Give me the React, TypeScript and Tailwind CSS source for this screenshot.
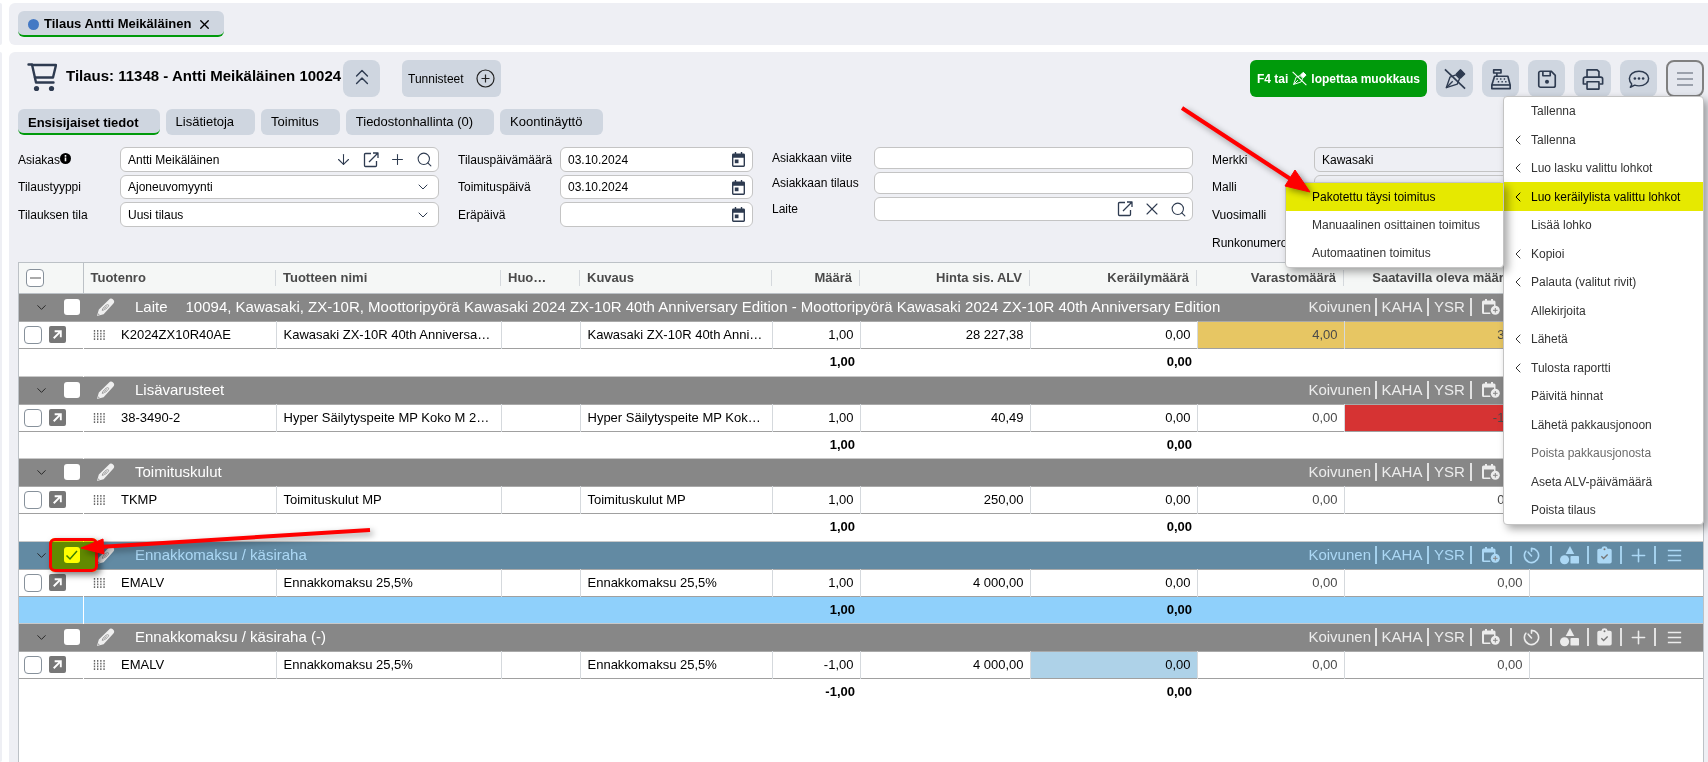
import React from 'react';
import { ArrowDown, ChevronDown, ChevronLeft, ChevronsUp, Plus, Search, X } from 'lucide-react';

type IconProps = { className?: string };

const IconCart = ({ className }: IconProps) => (
  <svg className={className} viewBox="0 0 30 30" fill="none" stroke="currentColor" strokeWidth="2.400" strokeLinecap="round" strokeLinejoin="round" aria-hidden>
    <path d="M1.500 2.500H5l4 18h17.500" />
    <path d="M5 3h24l-3 12.500H8" />
    <circle cx="9.500" cy="26.500" r="2.600" fill="currentColor" stroke="none" />
    <circle cx="24.500" cy="26.500" r="2.600" fill="currentColor" stroke="none" />
  </svg>
);

const IconExternal = ({ className }: IconProps) => (
  <svg className={className} viewBox="0 0 16 16" fill="none" stroke="currentColor" strokeWidth="1.300" strokeLinejoin="round" aria-hidden>
    <path d="M8 1.500H2.500a1 1 0 0 0-1 1v11a1 1 0 0 0 1 1h10a1 1 0 0 0 1-1V9" />
    <path d="M6 10 14.500 1.500M10 1h5v5" />
  </svg>
);

const IconCalendar = ({ className }: IconProps) => (
  <svg className={className} viewBox="0 0 14 16" aria-hidden>
    <path fill="currentColor" fillRule="evenodd" d="M3 0h1.500v1.500h5V0H11v1.500h1.500A1.500 1.500 0 0 1 14 3v11.500a1.500 1.500 0 0 1-1.500 1.500h-11A1.500 1.500 0 0 1 0 14.500V3a1.500 1.500 0 0 1 1.500-1.500H3zM1.500 6v8.500h11V6z" />
    <rect x="3" y="8" width="4" height="4" fill="currentColor" />
  </svg>
);

const IconPenOff = ({ className }: IconProps) => (
  <svg className={className} viewBox="0 0 24 24" fill="none" stroke="currentColor" strokeWidth="1.500" strokeLinejoin="round" aria-hidden>
    <path d="M2.500 21.500 6.500 10l6.500-2.500 4 4L14.500 17.500z" />
    <path d="M2.500 21.500 9.500 14.500" />
    <path d="M13.500 6.500 18 2l4.500 4.500-4.500 4.500z" fill="currentColor" />
    <path d="M1 1.500 23 22.500" strokeWidth="1.800" />
  </svg>
);

const IconRegister = ({ className }: IconProps) => (
  <svg className={className} viewBox="0 0 24 24" fill="none" stroke="currentColor" strokeWidth="1.800" strokeLinejoin="round" aria-hidden>
    <path d="M4 2h8v3.500H4zM7.500 5.500V9M5 9h14.500l2.500 9.500V22.500H2V18.500z" />
    <path d="M2 18.500h20" />
    <path d="M7 12h1.500M11 12h1.500M15 12h1.500M8.500 15h1.500M12.500 15H14M16.500 15H18" />
  </svg>
);

const IconFloppy = ({ className }: IconProps) => (
  <svg className={className} viewBox="0 0 24 24" fill="none" stroke="currentColor" strokeWidth="1.800" strokeLinejoin="round" aria-hidden>
    <path d="M5 3.500h11.500L21 8v11a2 2 0 0 1-2 2H5a2 2 0 0 1-2-2V5.500a2 2 0 0 1 2-2z" />
    <path d="M7.500 4v4.500h8V4" />
    <circle cx="12" cy="15" r="2.200" fill="currentColor" stroke="none" />
  </svg>
);

const IconPrinter = ({ className }: IconProps) => (
  <svg className={className} viewBox="0 0 24 24" fill="none" stroke="currentColor" strokeWidth="1.800" strokeLinejoin="round" aria-hidden>
    <path d="M5.500 10V2h11l2 2v6" />
    <path d="M5 17.500H1.500V12a2 2 0 0 1 2-2h17a2 2 0 0 1 2 2v5.500H19" />
    <path d="M5.500 15h13v8h-13z" />
  </svg>
);

const IconChat = ({ className }: IconProps) => (
  <svg className={className} viewBox="0 0 24 24" fill="none" stroke="currentColor" strokeWidth="1.600" strokeLinejoin="round" aria-hidden>
    <path d="M12 3.500c6 0 10.500 3.500 10.500 8s-4.500 8-10.500 8c-1.800 0-3.300-.3-4.700-.8L2.500 21c1-1.200 1.500-2.300 1.500-3.500-1.700-1.600-2.500-3.700-2.500-6 0-4.500 4.500-8 10.500-8z" />
    <g fill="currentColor" stroke="none">
      <circle cx="7.500" cy="11.500" r="1.400" />
      <circle cx="12" cy="11.500" r="1.400" />
      <circle cx="16.500" cy="11.500" r="1.400" />
    </g>
  </svg>
);

const IconBurger = ({ className }: IconProps) => (
  <svg className={className} viewBox="0 0 18 18" fill="none" stroke="currentColor" strokeWidth="2" aria-hidden>
    <path d="M1 3h16M1 9h16M1 15h16" />
  </svg>
);

const IconPencil = ({ className }: IconProps) => (
  <svg className={className} viewBox="0 0 20 20" aria-hidden>
    <path fill="#efefef" d="M1 19 3 12 13.500 1.800a3 3 0 0 1 4.600 4.300L8 17z" />
    <path d="M1.500 18.500l1-2.500L4 17.500z" fill="#aaaaaa" />
    <path d="M6.500 13c0-2 4-6 5.800-6s.8 2-.6 3.300-4 2.700-5.200 2.700z" fill="none" stroke="#9a9a9a" />
    <path d="M8.500 11.300 11 8.800" stroke="#9a9a9a" />
  </svg>
);

const IconCalendarPlus = ({ className }: IconProps) => (
  <svg className={className} viewBox="0 0 18 18" aria-hidden>
    <path fill="currentColor" fillRule="evenodd" d="M3 1h2v1.500h4V1h2v1.500h1A1.500 1.500 0 0 1 13.500 4v4.200L12 8.500V6.500H2v8h6l.5 1.500H1.500A1.500 1.500 0 0 1 0 14.500V4a1.500 1.500 0 0 1 1.500-1.500H3z" />
    <circle cx="13.300" cy="12.300" r="4.500" fill="currentColor" />
    <path d="M11 12.300h4.600M13.300 10v4.600" stroke="#858585" />
  </svg>
);

const IconTimer = ({ className }: IconProps) => (
  <svg className={className} viewBox="0 0 18 18" fill="none" stroke="currentColor" strokeWidth="1.700" strokeLinecap="round" aria-hidden>
    <path d="M9 1.500v3M9 1.500a7.500 7.500 0 1 1-6 3" />
    <path d="M5.500 5.500 9 9.500" />
  </svg>
);

const IconShapes = ({ className }: IconProps) => (
  <svg className={className} viewBox="0 0 20 20" fill="currentColor" aria-hidden>
    <path d="M10.500 0 15 8.500H6z" />
    <circle cx="4.800" cy="14.500" r="4.800" />
    <rect x="11" y="10.500" width="9" height="8" rx="1" />
  </svg>
);

const IconClipboard = ({ className }: IconProps) => (
  <svg className={className} viewBox="0 0 16 20" aria-hidden>
    <path fill="currentColor" d="M2 3h2.500a3.600 3.600 0 0 1 7 0H14a2 2 0 0 1 2 2v12.500a2 2 0 0 1-2 2H2a2 2 0 0 1-2-2V5a2 2 0 0 1 2-2z" />
    <circle cx="8" cy="3.500" r="1.100" fill="#777777" />
    <path d="m4.500 11.500 2.500 2.500 4.500-4.500" fill="none" stroke="#777777" strokeWidth="1.500" />
  </svg>
);

const IconInfo = ({ className }: IconProps) => (
  <svg className={className} viewBox="0 0 12 12" aria-hidden>
    <circle cx="6" cy="6" r="6" fill="#000000" />
    <path d="M6 2.300v1.700M6 5v4" stroke="#ffffff" strokeWidth="1.700" />
  </svg>
);

const IconOpenBox = ({ className }: IconProps) => (
  <svg className={className} viewBox="0 0 18 18" aria-hidden>
    <rect width="18" height="18" rx="2" fill="#777777" />
    <path d="M5 13 12 6M6 5.500h6.500V12" fill="none" stroke="#ffffff" strokeWidth="2" />
  </svg>
);

const IconGrip = ({ className }: IconProps) => (
  <svg className={className} viewBox="0 0 13 11" aria-hidden>
    <path d="M1 0v11M4.500 0v11M8 0v11M11.500 0v11" stroke="#666666" strokeWidth="1.500" strokeDasharray="2 1" />
  </svg>
);

const fieldBox = 'flex items-center rounded-md border border-[#c4c4c4] min-w-0 flex-1 h-full';

type FieldProps = {
  id: string;
  label: string;
  value?: string;
  height: string;
  info?: boolean;
  readOnly?: boolean;
  children?: React.ReactNode;
};

const TextField = ({ id, label, value = '', height, info, readOnly, children }: FieldProps) => (
  <div className={`flex items-center ${height}`}>
    <label htmlFor={id} className="flex w-[102px] shrink-0 items-center">
      {label}
      {info && <IconInfo className="mb-0.5 size-[11px]" />}
    </label>
    <div className={`${fieldBox} ${readOnly ? '' : 'bg-white'}`}>
      <input id={id} defaultValue={value} readOnly={readOnly} className="w-full min-w-0 flex-1 bg-transparent pl-[7px] outline-none" />
      {children}
    </div>
  </div>
);

const SelectField = ({ id, label, value, height }: FieldProps) => (
  <div className={`flex items-center ${height}`}>
    <label htmlFor={id} className="w-[102px] shrink-0">{label}</label>
    <div className={`${fieldBox} relative bg-white`}>
      <select id={id} defaultValue={value} className="w-full appearance-none bg-transparent pl-[7px] outline-none">
        <option>{value}</option>
      </select>
      <ChevronDown className="pointer-events-none absolute right-[7px] size-4 text-[#2e3b50]" strokeWidth={1.5} />
    </div>
  </div>
);

const FieldButton = ({ label, children }: { label: string; children: React.ReactNode }) => (
  <button type="button" aria-label={label} className="flex w-[27px] shrink-0 items-center justify-center text-[#2e3b50]">
    {children}
  </button>
);

const tabs = ['Ensisijaiset tiedot', 'Lisätietoja', 'Toimitus', 'Tiedostonhallinta (0)', 'Koontinäyttö'];

const tools: { label: string; icon: React.ComponentType<IconProps> }[] = [
  { label: 'Lopeta muokkaus', icon: IconPenOff },
  { label: 'Kassa', icon: IconRegister },
  { label: 'Tallenna', icon: IconFloppy },
  { label: 'Tulosta', icon: IconPrinter },
  { label: 'Viestit', icon: IconChat },
];

type MenuItem = { label: string; sub?: boolean; muted?: boolean; open?: string[] };

const menuItems: MenuItem[] = [
  { label: 'Tallenna' },
  { label: 'Tallenna', sub: true },
  { label: 'Luo lasku valittu lohkot', sub: true },
  {
    label: 'Luo keräilylista valittu lohkot',
    sub: true,
    open: ['Pakotettu täysi toimitus', 'Manuaalinen osittainen toimitus', 'Automaatinen toimitus'],
  },
  { label: 'Lisää lohko' },
  { label: 'Kopioi', sub: true },
  { label: 'Palauta (valitut rivit)', sub: true },
  { label: 'Allekirjoita' },
  { label: 'Lähetä', sub: true },
  { label: 'Tulosta raportti', sub: true },
  { label: 'Päivitä hinnat' },
  { label: 'Lähetä pakkausjonoon' },
  { label: 'Poista pakkausjonosta', muted: true },
  { label: 'Aseta ALV-päivämäärä' },
  { label: 'Poista tilaus' },
];

const SubMenu = ({ items }: { items: string[] }) => (
  <ul className="absolute top-0 right-full w-[219px] rounded-sm border border-[#c4c4c4] bg-white text-[#333333] shadow-[4px_4px_9px_rgba(0,0,0,0.35)]">
    {items.map((item, i) => (
      <li key={item} className={`h-[28px] ${i === 0 ? 'bg-[#e6e900] text-black' : ''}`}>
        <button type="button" className="h-full w-full pl-[26px] text-left whitespace-nowrap">{item}</button>
      </li>
    ))}
    <li className="pointer-events-none absolute -top-[77px] -left-[106px]" aria-hidden>
      <svg className="h-[90px] w-[135px] drop-shadow-[3px_3px_3px_rgba(0,0,0,0.4)]" viewBox="0 0 135 90">
        <path d="M2 2 112 74" stroke="#ff0000" strokeWidth="4" />
        <path d="M130 86 105 80l10-16z" fill="#ff0000" stroke="#ff0000" />
      </svg>
    </li>
  </ul>
);

const OrderMenu = () => (
  <ul className="absolute top-full right-0 z-20 -mt-px w-[201px] rounded-sm border border-[#c4c4c4] bg-white text-[#333333] shadow-[4px_4px_9px_rgba(0,0,0,0.35)]">
    {menuItems.map((item, i) => (
      <li key={i} className={`relative h-[28px] even:h-[29px] ${item.open ? 'bg-[#e6e900] text-black' : ''} ${item.muted ? 'text-[#6b6b6b]' : ''}`}>
        <button type="button" className="flex h-full w-full items-center pl-[6px] text-left whitespace-nowrap">
          <span className="w-[21px]">{item.sub && <ChevronLeft className="size-4" strokeWidth={1.5} />}</span>
          {item.label}
        </button>
        {item.open && <SubMenu items={item.open} />}
      </li>
    ))}
  </ul>
);

const columns = [
  { title: 'Tuotenro', style: 'w-[193px] text-left' },
  { title: 'Tuotteen nimi', style: 'w-[225px] text-left' },
  { title: 'Huo…', style: 'w-[79px] text-left' },
  { title: 'Kuvaus', style: 'w-[192px] text-left' },
  { title: 'Määrä', style: 'w-[88px] text-right' },
  { title: 'Hinta sis. ALV', style: 'w-[170px] text-right' },
  { title: 'Keräilymäärä', style: 'w-[167px] text-right' },
  { title: 'Varastomäärä', style: 'w-[147px] text-right' },
  { title: 'Saatavilla oleva määrä', style: 'w-[185px] pr-[10px] text-right' },
];

type Block = {
  title: string;
  detail?: string;
  selected?: boolean;
  code: string;
  name: string;
  description: string;
  amount: string;
  price: string;
  stock: string;
  available: string;
  pickColor?: string;
  stockColor?: string;
  availableColor?: string;
};

const blocks: Block[] = [
  {
    title: 'Laite',
    detail: '10094, Kawasaki, ZX-10R, Moottoripyörä Kawasaki 2024 ZX-10R 40th Anniversary Edition - Moottoripyörä Kawasaki 2024 ZX-10R 40th Anniversary Edition',
    code: 'K2024ZX10R40AE',
    name: 'Kawasaki ZX-10R 40th Anniversa…',
    description: 'Kawasaki ZX-10R 40th Anni…',
    amount: '1,00',
    price: '28 227,38',
    stock: '4,00',
    available: '3,00',
    stockColor: 'bg-[#e7c663]',
    availableColor: 'bg-[#e7c663]',
  },
  {
    title: 'Lisävarusteet',
    code: '38-3490-2',
    name: 'Hyper Säilytyspeite MP Koko M 2…',
    description: 'Hyper Säilytyspeite MP Kok…',
    amount: '1,00',
    price: '40,49',
    stock: '0,00',
    available: '-1,00',
    availableColor: 'bg-[#d63333]',
  },
  {
    title: 'Toimituskulut',
    code: 'TKMP',
    name: 'Toimituskulut MP',
    description: 'Toimituskulut MP',
    amount: '1,00',
    price: '250,00',
    stock: '0,00',
    available: '0,00',
  },
  {
    title: 'Ennakkomaksu / käsiraha',
    selected: true,
    code: 'EMALV',
    name: 'Ennakkomaksu 25,5%',
    description: 'Ennakkomaksu 25,5%',
    amount: '1,00',
    price: '4 000,00',
    stock: '0,00',
    available: '0,00',
  },
  {
    title: 'Ennakkomaksu / käsiraha (-)',
    code: 'EMALV',
    name: 'Ennakkomaksu 25,5%',
    description: 'Ennakkomaksu 25,5%',
    amount: '-1,00',
    price: '4 000,00',
    stock: '0,00',
    available: '0,00',
    pickColor: 'bg-[#aed2e8]',
  },
];

const Separator = () => <span className="h-[18px] w-[2px] bg-current opacity-90" />;

const BlockActions = () => (
  <div className="ml-auto flex items-center text-[#ececec] in-data-selected:text-[#acd8f5]">
    <button type="button" className="pr-[4px]">Koivunen</button>
    <Separator />
    <button type="button" className="w-[50px]">KAHA</button>
    <Separator />
    <button type="button" className="w-[41px]">YSR</button>
    <Separator />
    <button type="button" aria-label="Lisää päivä" className="flex w-[38px] justify-center"><IconCalendarPlus className="size-[18px]" /></button>
    <Separator />
    <button type="button" aria-label="Ajastin" className="flex w-[38px] justify-center"><IconTimer className="size-[17px]" /></button>
    <Separator />
    <button type="button" aria-label="Paketit" className="flex w-[35px] justify-center"><IconShapes className="size-[19px]" /></button>
    <Separator />
    <button type="button" aria-label="Tehtävät" className="flex w-[31px] justify-center"><IconClipboard className="h-[18px] w-[15px]" /></button>
    <Separator />
    <button type="button" aria-label="Lisää rivi" className="flex w-[32px] justify-center"><Plus className="size-[21px]" strokeWidth={1.8} /></button>
    <Separator />
    <button type="button" aria-label="Lohkon valikko" className="mr-[10px] flex w-[37px] justify-center"><IconBurger className="size-[15px]" /></button>
  </div>
);

// Marks the block whose picking list is being created.
// No z-index on the wrapper: the yellow layer has to blend with the row below it.
const SelectionMark = () => (
  <div className="pointer-events-none absolute -top-[4px] left-[30px]" aria-hidden>
    <div className="h-[34px] w-[49px] rounded-md bg-[#ffff00] mix-blend-multiply" />
    <div className="absolute inset-0 rounded-md border-[3px] border-[#ff0000] shadow-[3px_3px_6px_rgba(0,0,0,0.5)]" />
    <svg className="absolute -top-[11px] left-[30px] h-[30px] w-[295px] drop-shadow-[3px_3px_3px_rgba(0,0,0,0.4)]" viewBox="0 0 295 30">
      <path d="M20 20 291 3" stroke="#ff0000" strokeWidth="4" />
      <path d="M2 21 24 12l1 15z" fill="#ff0000" stroke="#ff0000" />
    </svg>
  </div>
);

const cell = 'border-r border-[#d5d9dd] px-[6px] whitespace-nowrap';

const BlockRows = ({ block, index }: { block: Block; index: number }) => {
  const { selected } = block;
  return (
    <tbody>
      <tr data-selected={selected || undefined} className={`h-[28px] border-t border-[#c9c9c9] text-[15px] ${selected ? 'bg-[#628aa3] text-[#acd8f5]' : 'bg-[#878787] text-white'}`}>
        <td className="relative p-0">
          <div className="flex items-center pl-[15px]">
            <button type="button" aria-label="Sulje lohko" className="text-[#222222]"><ChevronDown className="size-[15px]" strokeWidth={1.5} /></button>
            <input
              type="checkbox"
              defaultChecked={selected}
              aria-label={`Valitse ${block.title}`}
              className="ml-[15px] size-4 appearance-none rounded-[3px] bg-white"
            />
            {selected && (
              <svg className="pointer-events-none -ml-[15px] size-[14px]" viewBox="0 0 14 14" fill="none" stroke="#3c7f5c" strokeWidth="1.5" aria-hidden>
                <path d="m1.500 7.500 3.500 3.500 7-8" />
              </svg>
            )}
          </div>
          {selected && <SelectionMark />}
        </td>
        <td colSpan={10} className="p-0">
          <div className="flex items-center whitespace-nowrap">
            <button type="button" aria-label="Muokkaa lohkoa" className="ml-[13px]"><IconPencil className="size-[19px]" /></button>
            <span className="ml-[20px]">{block.title}</span>
            {block.detail && <span className="ml-[18px]">{block.detail}</span>}
            <BlockActions />
          </div>
        </td>
      </tr>
      <tr className="h-[27px] border-t border-b border-t-[#a9a9a9] border-b-[#a0a0a0] bg-white">
        <td className="p-0">
          <div className="flex items-center gap-[7px] pl-[5px]">
            <input type="checkbox" aria-label={`Valitse ${block.code}`} className="size-[18px] appearance-none rounded-[4px] border border-[#87919b] bg-white" />
            <button type="button" aria-label="Avaa tuote"><IconOpenBox className="size-[17px]" /></button>
          </div>
        </td>
        <td className={cell}>
          <div className="flex items-center gap-[15px] pl-[4px]">
            <IconGrip className="h-[10px] w-[13px]" />
            {block.code}
          </div>
        </td>
        <td className={`${cell} pl-[7px]`}>{block.name}</td>
        <td className={cell} />
        <td className={`${cell} pl-[7px]`}>{block.description}</td>
        <td className={`${cell} text-right`}>{block.amount}</td>
        <td className={`${cell} text-right`}>{block.price}</td>
        <td className={`${cell} text-right ${block.pickColor ?? ''}`}>0,00</td>
        <td className={`${cell} text-right text-[#4a4a4a] ${block.stockColor ?? ''}`}>{block.stock}</td>
        <td className={`${cell} text-right text-[#4a4a4a] ${block.availableColor ?? ''}`}>{block.available}</td>
        <td className="p-0" />
      </tr>
      <tr className={`font-bold ${index % 2 ? 'h-[27px]' : 'h-[28px]'} ${selected ? 'bg-[#8fd0fb]' : 'bg-white'}`}>
        <td className="border-r border-white p-0" />
        <td colSpan={4} />
        <td className="px-[5px] text-right">{block.amount}</td>
        <td />
        <td className="px-[5px] text-right">0,00</td>
        <td colSpan={3} />
      </tr>
    </tbody>
  );
};

const OrderTable = () => (
  <div className="flex-1 border border-b-0 border-[#bcc1c6] bg-white">
    <table className="w-full table-fixed border-collapse text-[13px] leading-4">
      <thead>
        <tr className="h-[30px] border-b border-[#bcc1c6] bg-[#f5f7f6] text-[#4a4a4a]">
          <th className="w-[64px] border-r border-[#bcc1c6] p-0">
            <button type="button" aria-label="Sulje kaikki" className="ml-[7px] flex size-[18px] items-center justify-center rounded-[4px] border border-[#87919b] bg-white">
              <span className="h-[2px] w-[11px] bg-[#aaaaaa]" />
            </button>
          </th>
          {columns.map((col) => (
            <th key={col.title} className={col.style}>
              <div className="border-r border-[#d5d9dd] px-[7px] whitespace-nowrap">{col.title}</div>
            </th>
          ))}
          <th className="p-0" />
        </tr>
      </thead>
      {blocks.map((block, i) => (
        <BlockRows key={block.title} block={block} index={i} />
      ))}
    </table>
  </div>
);

const OrderForm = () => (
  <form className="mt-[12px] grid grid-cols-[421fr_295fr_421fr_422fr] gap-x-[19px] pr-[70px]">
    <div className="flex flex-col gap-[3px]">
      <TextField id="asiakas" label="Asiakas" value="Antti Meikäläinen" height="h-[25px]" info>
        <FieldButton label="Hae"><ArrowDown className="size-[17px]" strokeWidth={1.5} /></FieldButton>
        <FieldButton label="Avaa"><IconExternal className="size-4" /></FieldButton>
        <FieldButton label="Lisää"><Plus className="size-[17px]" strokeWidth={1.5} /></FieldButton>
        <FieldButton label="Etsi"><Search className="size-[17px]" strokeWidth={1.5} /></FieldButton>
      </TextField>
      <SelectField id="tyyppi" label="Tilaustyyppi" value="Ajoneuvomyynti" height="h-[24px]" />
      <SelectField id="tila" label="Tilauksen tila" value="Uusi tilaus" height="h-[25px]" />
    </div>
    <div className="flex flex-col gap-[3px]">
      <TextField id="tilauspaiva" label="Tilauspäivämäärä" value="03.10.2024" height="h-[25px]">
        <FieldButton label="Valitse päivä"><IconCalendar className="h-[15px] w-[13px]" /></FieldButton>
      </TextField>
      <TextField id="toimituspaiva" label="Toimituspäivä" value="03.10.2024" height="h-[24px]">
        <FieldButton label="Valitse päivä"><IconCalendar className="h-[15px] w-[13px]" /></FieldButton>
      </TextField>
      <TextField id="erapaiva" label="Eräpäivä" height="h-[25px]">
        <FieldButton label="Valitse päivä"><IconCalendar className="h-[15px] w-[13px]" /></FieldButton>
      </TextField>
    </div>
    <div className="flex flex-col gap-[3px]">
      <TextField id="viite" label="Asiakkaan viite" height="h-[22px]" />
      <TextField id="astilaus" label="Asiakkaan tilaus" height="h-[22px]" />
      <TextField id="laite" label="Laite" height="h-[24px]">
        <FieldButton label="Avaa"><IconExternal className="size-4" /></FieldButton>
        <FieldButton label="Tyhjennä"><X className="size-5" strokeWidth={1.3} /></FieldButton>
        <FieldButton label="Etsi"><Search className="size-[17px]" strokeWidth={1.5} /></FieldButton>
      </TextField>
    </div>
    <div className="flex flex-col gap-[3px]">
      <TextField id="merkki" label="Merkki" value="Kawasaki" height="h-[25px]" readOnly />
      <TextField id="malli" label="Malli" value="ZX-10R" height="h-[24px]" readOnly />
      <TextField id="vuosimalli" label="Vuosimalli" height="h-[25px]" readOnly />
      <TextField id="runko" label="Runkonumero" height="h-[25px]" readOnly />
    </div>
  </form>
);

const OrderHeader = () => (
  <header className="flex h-[37px] items-center">
    <IconCart className="mb-[4px] ml-[9px] size-[30px] text-[#2e3b50]" />
    <h1 className="mb-[5px] ml-[9px] w-[277px] text-[15px] font-bold whitespace-nowrap">Tilaus: 11348 - Antti Meikäläinen 10024</h1>
    <button type="button" aria-label="Tiivistä" className="flex h-full w-[37px] items-center justify-center rounded-lg bg-[#cfd6e0] pb-1 text-[#2e3b50]">
      <ChevronsUp className="size-[26px]" strokeWidth={1.3} />
    </button>
    <button type="button" className="ml-[22px] flex h-full w-[99px] items-center justify-between rounded-md bg-[#cfd6e0] px-[6px]">
      Tunnisteet
      <svg className="size-[19px]" viewBox="0 0 19 19" fill="none" stroke="#222222" strokeWidth="1.2" aria-hidden>
        <circle cx="9.500" cy="9.500" r="8.500" />
        <path d="M5.500 9.500h8M9.500 5.500v8" />
      </svg>
    </button>
    <div className="ml-auto flex h-full gap-[9px]">
      <button type="button" className="flex w-[177px] items-center justify-center gap-[4px] rounded-md bg-[#009a0b] font-bold whitespace-nowrap text-white">
        F4 tai
        <IconPenOff className="size-[15px]" />
        lopettaa muokkaus
      </button>
      {tools.map(({ label, icon: Icon }) => (
        <button key={label} type="button" aria-label={label} className="flex w-[37px] items-center justify-center rounded-lg bg-[#cfd6e0] text-[#2e3b50]">
          <Icon className="size-[22px]" />
        </button>
      ))}
      <div className="relative">
        <button type="button" aria-label="Valikko" className="flex h-full w-[38px] items-center justify-center rounded-lg border-2 border-[#808080] bg-[#e4e7ee] text-[#9ba1ac]">
          <IconBurger className="size-[18px]" />
        </button>
        <OrderMenu />
      </div>
    </div>
  </header>
);

export default function App() {
  return (
    <div className="grid min-h-screen grid-cols-[2px_1fr] grid-rows-[42px_1fr] gap-[7px] overflow-hidden bg-white pt-[3px] font-['Liberation_Sans',Arial,sans-serif] text-[12px] leading-4 text-black">
      <div className="rounded-r-sm bg-[#eeeff4]" />
      <nav className="rounded-l-md bg-[#eeeff4] pt-[8px] pl-[9px]">
        <div className="flex h-[26px] w-[206px] items-center rounded-md border-b-2 border-[#009a0b] bg-[#cfd6e0] pt-[2px] pl-[10px] text-[13px] font-bold">
          <span className="size-[11px] rounded-full bg-[#4479c4]" />
          <a href="#tilaus" className="ml-[5px] whitespace-nowrap">Tilaus Antti Meikäläinen</a>
          <button type="button" aria-label="Sulje" className="ml-[6px]"><X className="size-[15px]" strokeWidth={2.2} /></button>
        </div>
      </nav>
      <div className="rounded-r-sm bg-[#eeeff4]" />
      <main className="flex min-w-0 flex-col rounded-tl-md bg-[#eeeff4] pt-[8px] pr-[4px] pl-[9px]">
        <OrderHeader />
        <nav className="mt-[12px] flex gap-[6px] text-[13px]">
          {tabs.map((tab, i) => (
            <button
              key={tab}
              type="button"
              className={`h-[26px] rounded-md bg-[#cfd6e0] pr-[21px] pl-[10px] whitespace-nowrap ${i === 0 ? 'border-b-2 border-[#009a0b] pt-[3px] font-bold' : ''}`}
            >
              {tab}
            </button>
          ))}
        </nav>
        <OrderForm />
        <div className="mt-[7px] flex flex-1 flex-col">
          <OrderTable />
        </div>
      </main>
    </div>
  );
}
